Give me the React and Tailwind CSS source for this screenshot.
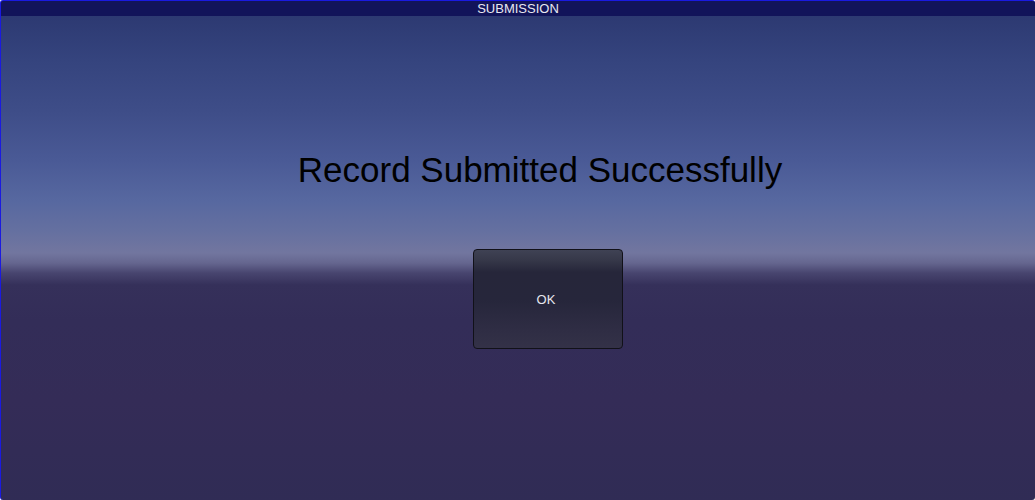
export default function App() {
  return (
    <div
      className="flex h-[500px] w-[1035px] flex-col overflow-hidden rounded-[3px] border-l border-t border-[#1a1ae0] bg-[linear-gradient(to_bottom,#2a366e_0px,#35447e_60px,#3e4d88_110px,#4a5a96_160px,#5768a0_200px,#6570a0_230px,#72769f_252px,#65668f_262px,#48456f_272px,#35305a_284px,#332d58_320px,#342c57_400px,#302c55_500px)]"
      style={{ fontFamily: '"Liberation Sans", Arial, sans-serif' }}
    >
      <div className="flex h-[15px] shrink-0 items-center justify-center bg-[#12145a] text-[13px] leading-none text-[#e8e8f0]">
        SUBMISSION
      </div>

      <div className="flex flex-1 flex-col items-center pt-[134px]">
        <h1 className="ml-[44px] text-[35px] leading-[40px] text-black">Record Submitted Successfully</h1>

        <button className="ml-[60px] mt-[59px] flex h-[100px] w-[150px] items-center justify-center rounded-[4px] border border-[#111118] bg-[linear-gradient(to_bottom,#3f4254_0px,#363849_10px,#26263a_22px,#26263b_50px,#2f2d44_80px,#343248_100px)] pr-[4px] pt-[2px] text-[13px] text-[#e6e6ee]">
          OK
        </button>
      </div>
    </div>
  )
}
